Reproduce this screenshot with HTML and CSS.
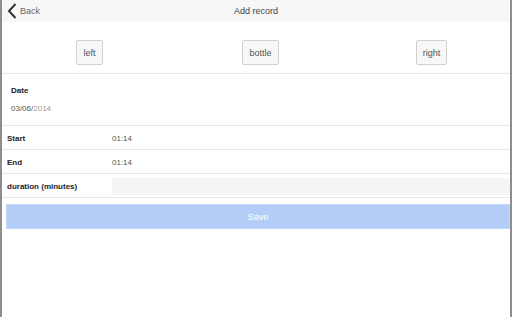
FILE: index.html
```html
<!DOCTYPE html>
<html>
    <head>
        <title>Add record</title>
        <meta charset="UTF-8">
        <link rel="stylesheet" href="styles.css">
    </head>
    <body>
        <div class="page">
            <div class="header">
                <a class="back" href="#">
                    <svg width="10" height="16" viewBox="0 0 10 16"><path d="M8.5 1 L2 8 L8.5 15" fill="none" stroke="#333" stroke-width="2"/></svg>
                    <span>Back</span>
                </a>
                <div class="title">Add record</div>
            </div>
            <div class="sides">
                <div class="cell"><button class="side">left</button></div>
                <div class="cell"><button class="side">bottle</button></div>
                <div class="cell"><button class="side">right</button></div>
            </div>
            <div class="date">
                <div class="label">Date</div>
                <div class="date-value">03/06/<span class="year">2014</span></div>
            </div>
            <div class="row">
                <div class="label">Start</div>
                <div class="value">01:14</div>
            </div>
            <div class="row">
                <div class="label">End</div>
                <div class="value">01:14</div>
            </div>
            <div class="row">
                <div class="label">duration (minutes)</div>
                <div class="input"></div>
            </div>
            <div class="actions">
                <button class="save">Save</button>
            </div>
        </div>
    </body>
</html>
```

FILE: styles.css
```css
* {
    margin: 0;
    padding: 0;
    box-sizing: border-box;
}

body {
    font-family: "Liberation Sans", Arial, sans-serif;
    font-size: 8px;
    color: #333;
    background: #fff;
}

.page {
    height: 317px;
    border-left: 2px solid #8e8e8e;
    border-right: 2px solid #8e8e8e;
    overflow: hidden;
}

.header {
    height: 22px;
    background: #f7f7f7;
    display: flex;
    align-items: center;
    position: relative;
}

.header .back {
    display: flex;
    align-items: center;
    gap: 3px;
    padding-left: 5px;
    color: #666;
    text-decoration: none;
    font-size: 9px;
}

.header .title {
    position: absolute;
    left: 0;
    right: 0;
    text-align: center;
    font-size: 9px;
    color: #444;
    pointer-events: none;
}

.sides {
    display: grid;
    grid-template-columns: 171px 171px 171px;
    padding: 18px 0 8px 2px;
    border-bottom: 1px solid #e8e8e8;
}

.sides .cell {
    display: flex;
    justify-content: center;
}

.side {
    height: 25px;
    padding: 0 6px;
    background: #f7f7f7;
    border: 1px solid #d0d0d0;
    border-radius: 2px;
    font-family: inherit;
    font-size: 9px;
    color: #555;
}

.label {
    font-weight: bold;
    color: #222;
}

.date {
    padding: 12px 9px 12px 9px;
    border-bottom: 1px solid #e8e8e8;
}

.date-value {
    margin-top: 9px;
    color: #555;
}

.date-value .year {
    color: #999;
}

.row {
    display: flex;
    align-items: center;
    height: 24px;
    border-bottom: 1px solid #e8e8e8;
    padding: 1px 0 0 5px;
}

.row .label {
    width: 105px;
}

.row .value {
    color: #555;
}

.row .input {
    flex: 1;
    height: 17px;
    background: #f5f5f5;
}

.actions {
    padding: 6px 0 0 4px;
}

.save {
    display: block;
    width: 100%;
    height: 25px;
    background: #b4cdf6;
    border: 1px solid #c6d8f7;
    color: #fff;
    font-family: inherit;
    font-size: 9px;
}
```
